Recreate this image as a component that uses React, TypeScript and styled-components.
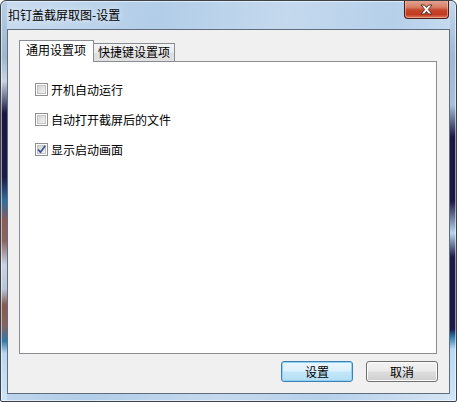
import React from "react";
import styled, { createGlobalStyle } from "styled-components";

const Global = createGlobalStyle`
  html, body { margin: 0; padding: 0; background: #ffffff; }
  body { width: 457px; height: 402px; overflow: hidden; }
  * { box-sizing: border-box; }
`;

const FONT = `"Noto Sans CJK SC", "Liberation Sans", sans-serif`;

const Window = styled.div`
  width: 457px;
  height: 402px;
  display: flex;
  flex-direction: column;
  border: 1px solid #3d4248;
  border-radius: 6px 6px 2px 2px;
  font-family: ${FONT};
  font-size: 12px;
  color: #000;
  background:
    linear-gradient(180deg, #b6cfe6 0%, #9cb7d0 14%, #c8d6e4 20%, #1a1744 28%, #1c1a48 44%,
      #2e6fa0 50%, #8e5a55 55%, #8e6460 60%, #c7d3e3 66%, #b9c6d8 72%, #87594f 76%,
      #8a625d 81%, #2c79ac 85%, #b8d7f2 88%, #cfe4f8 100%) left top / 6px 100% no-repeat,
    linear-gradient(180deg, #c2d8ee 0%, #9fb9d3 14%, #a8c1da 26%, #1a1744 34%, #1a1744 50%,
      #b9d5ee 58%, #1c1a48 64%, #1c1a48 82%, #2c7aad 84%, #bad8f3 87%, #cfe4f8 100%) right top / 6px 100% no-repeat,
    linear-gradient(100deg, #c9dcef 0%, #b2cde8 30%, #c4d9ee 55%, #b6d0ea 75%, #d5e5f4 100%);
  box-shadow: inset 0 0 0 1px rgba(255, 255, 255, 0.55);
  overflow: hidden;
`;

const TitleBar = styled.div`
  height: 28px;
  display: flex;
  align-items: flex-start;
  justify-content: space-between;
  padding: 0 7px 0 7px;
`;

const Title = styled.span`
  margin-top: 6px;
  line-height: 16px;
  color: #000;
  text-shadow: 0 0 6px rgba(255, 255, 255, 0.9);
`;

const CloseButton = styled.div`
  width: 45px;
  height: 19px;
  margin-top: -1px;
  display: flex;
  align-items: center;
  justify-content: center;
  border: 1px solid #4c1d16;
  border-top: none;
  border-radius: 0 0 4px 4px;
  background: linear-gradient(180deg, #e6a898 0%, #d87f68 40%, #c7472c 55%, #c13a20 80%, #e0785a 100%);
  box-shadow: inset 0 0 0 1px rgba(255, 220, 200, 0.45);
`;

const Client = styled.div`
  flex: 1;
  margin: 0 6px 7px 6px;
  border: 1px solid #5f6d7d;
  background: #f0f0f0;
  display: flex;
  flex-direction: column;
  padding: 10px 12px 11px 11px;
`;

const TabStrip = styled.div`
  display: flex;
  align-items: flex-end;
  height: 21px;
`;

const Tab = styled.div<{ $active?: boolean }>`
  position: relative;
  z-index: ${(p) => (p.$active ? 1 : 0)};
  height: ${(p) => (p.$active ? "22px" : "18px")};
  margin-bottom: ${(p) => (p.$active ? "-1px" : "0")};
  margin-left: ${(p) => (p.$active ? "0" : "-1px")};
  padding: ${(p) => (p.$active ? "1px 7px 0 6px" : "0 4px 0 4px")};
  border: 1px solid #898c95;
  border-bottom: none;
  background: ${(p) => (p.$active ? "#ffffff" : "linear-gradient(180deg, #f3f3f3 0%, #ebebeb 50%, #dedede 50%, #e0e0e0 100%)")};
  line-height: 16px;
  white-space: nowrap;
`;

const Panel = styled.div`
  flex: 1;
  background: #ffffff;
  border: 1px solid #898c95;
  display: flex;
  flex-direction: column;
  gap: 17px;
  padding: 21px 0 0 15px;
`;

const CheckRow = styled.label`
  display: flex;
  align-items: center;
  gap: 3px;
  height: 13px;
  line-height: 13px;
`;

const Box = styled.span`
  width: 13px;
  height: 13px;
  flex: none;
  border: 1px solid #8e8f8f;
  background: #ffffff;
  padding: 1px;
  display: flex;
`;

const BoxInner = styled.span`
  flex: 1;
  display: flex;
  align-items: center;
  justify-content: center;
  background: linear-gradient(135deg, #cfcfcf 0%, #e2e2e2 45%, #f4f4f4 100%);
  box-shadow: inset 0 0 0 1px #c4c4c4;
`;

const Footer = styled.div`
  display: flex;
  justify-content: flex-end;
  gap: 13px;
  margin-top: 7px;
`;

const Button = styled.div<{ $default?: boolean }>`
  width: 72px;
  height: 21px;
  display: flex;
  align-items: center;
  justify-content: center;
  border: 1px solid ${(p) => (p.$default ? "#3c7fb1" : "#707070")};
  border-radius: 3px;
  background: ${(p) =>
    p.$default
      ? "linear-gradient(180deg, #ebf6fc 0%, #dcf0fb 48%, #c4e6f8 52%, #b3def5 100%)"
      : "linear-gradient(180deg, #f2f2f2 0%, #ebebeb 48%, #dddddd 52%, #cfcfcf 100%)"};
  box-shadow: inset 0 0 0 1px ${(p) => (p.$default ? "#8fd2f5" : "#fbfbfb")};
  margin-right: ${(p) => (p.$default ? "0" : "-1px")};
`;

function Check({ checked }: { checked?: boolean }) {
  return (
    <Box>
      <BoxInner>
        {checked && (
          <svg width="9" height="9" viewBox="0 0 9 9">
            <path d="M1 4.5 L3.5 7.2 L8.2 0.8" fill="none" stroke="#3f569a" strokeWidth="1.8" />
          </svg>
        )}
      </BoxInner>
    </Box>
  );
}

const options = [
  { label: "开机自动运行", checked: false },
  { label: "自动打开截屏后的文件", checked: false },
  { label: "显示启动画面", checked: true },
];

export default function App() {
  return (
    <>
      <Global />
      <Window>
        <TitleBar>
          <Title>扣钉盖截屏取图-设置</Title>
          <CloseButton>
            <svg width="13" height="11" viewBox="0 0 13 11">
              <path
                d="M1 1 H4.5 L6.5 3.5 L8.5 1 H12 L8.3 5.5 L12 10 H8.5 L6.5 7.5 L4.5 10 H1 L4.7 5.5 Z"
                fill="#ffffff"
                stroke="#5a2a22"
                strokeWidth="1"
                strokeLinejoin="round"
              />
            </svg>
          </CloseButton>
        </TitleBar>
        <Client>
          <TabStrip>
            <Tab $active>通用设置项</Tab>
            <Tab>快捷键设置项</Tab>
          </TabStrip>
          <Panel>
            {options.map((o) => (
              <CheckRow key={o.label}>
                <Check checked={o.checked} />
                <span>{o.label}</span>
              </CheckRow>
            ))}
          </Panel>
          <Footer>
            <Button $default>设置</Button>
            <Button>取消</Button>
          </Footer>
        </Client>
      </Window>
    </>
  );
}
